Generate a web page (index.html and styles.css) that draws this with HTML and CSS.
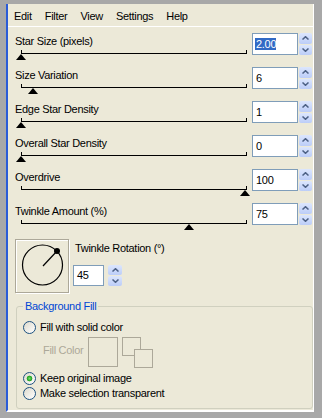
FILE: index.html
```html
<!DOCTYPE html>
<html lang="en">
	<head>
		<meta charset="UTF-8">
		<title>Star Effect</title>
		<link rel="stylesheet" href="styles.css">
	</head>
	<body>
		<div class="frame">
			<div class="panel">
				<div class="menubar">
					<span>Edit</span>
					<span>Filter</span>
					<span>View</span>
					<span>Settings</span>
					<span>Help</span>
				</div>

				<div class="rows">
					<div class="row">
						<div class="ctl">
							<div class="label">Star Size (pixels)</div>
							<div class="track"><span class="thumb" style="left:0px"></span></div>
						</div>
						<div class="spin">
							<div class="field field-sel"><span class="sel">2.00</span></div>
							<div class="arrows">
								<span class="btn"><svg width="7" height="4" viewBox="0 0 7 4"><polyline points="0.5,3.5 3.5,0.7 6.5,3.5"/></svg></span>
								<span class="btn"><svg width="7" height="4" viewBox="0 0 7 4"><polyline points="0.5,0.5 3.5,3.3 6.5,0.5"/></svg></span>
							</div>
						</div>
					</div>

					<div class="row">
						<div class="ctl">
							<div class="label">Size Variation</div>
							<div class="track"><span class="thumb" style="left:12px"></span></div>
						</div>
						<div class="spin">
							<div class="field">6</div>
							<div class="arrows">
								<span class="btn"><svg width="7" height="4" viewBox="0 0 7 4"><polyline points="0.5,3.5 3.5,0.7 6.5,3.5"/></svg></span>
								<span class="btn"><svg width="7" height="4" viewBox="0 0 7 4"><polyline points="0.5,0.5 3.5,3.3 6.5,0.5"/></svg></span>
							</div>
						</div>
					</div>

					<div class="row">
						<div class="ctl">
							<div class="label">Edge Star Density</div>
							<div class="track"><span class="thumb" style="left:0px"></span></div>
						</div>
						<div class="spin">
							<div class="field">1</div>
							<div class="arrows">
								<span class="btn"><svg width="7" height="4" viewBox="0 0 7 4"><polyline points="0.5,3.5 3.5,0.7 6.5,3.5"/></svg></span>
								<span class="btn"><svg width="7" height="4" viewBox="0 0 7 4"><polyline points="0.5,0.5 3.5,3.3 6.5,0.5"/></svg></span>
							</div>
						</div>
					</div>

					<div class="row">
						<div class="ctl">
							<div class="label">Overall Star Density</div>
							<div class="track"><span class="thumb" style="left:0px"></span></div>
						</div>
						<div class="spin">
							<div class="field">0</div>
							<div class="arrows">
								<span class="btn"><svg width="7" height="4" viewBox="0 0 7 4"><polyline points="0.5,3.5 3.5,0.7 6.5,3.5"/></svg></span>
								<span class="btn"><svg width="7" height="4" viewBox="0 0 7 4"><polyline points="0.5,0.5 3.5,3.3 6.5,0.5"/></svg></span>
							</div>
						</div>
					</div>

					<div class="row">
						<div class="ctl">
							<div class="label">Overdrive</div>
							<div class="track"><span class="thumb" style="left:224px"></span></div>
						</div>
						<div class="spin">
							<div class="field">100</div>
							<div class="arrows">
								<span class="btn"><svg width="7" height="4" viewBox="0 0 7 4"><polyline points="0.5,3.5 3.5,0.7 6.5,3.5"/></svg></span>
								<span class="btn"><svg width="7" height="4" viewBox="0 0 7 4"><polyline points="0.5,0.5 3.5,3.3 6.5,0.5"/></svg></span>
							</div>
						</div>
					</div>

					<div class="row">
						<div class="ctl">
							<div class="label">Twinkle Amount (%)</div>
							<div class="track"><span class="thumb" style="left:168px"></span></div>
						</div>
						<div class="spin">
							<div class="field">75</div>
							<div class="arrows">
								<span class="btn"><svg width="7" height="4" viewBox="0 0 7 4"><polyline points="0.5,3.5 3.5,0.7 6.5,3.5"/></svg></span>
								<span class="btn"><svg width="7" height="4" viewBox="0 0 7 4"><polyline points="0.5,0.5 3.5,3.3 6.5,0.5"/></svg></span>
							</div>
						</div>
					</div>
				</div>

				<div class="rotation">
					<div class="dial">
						<svg width="52" height="52" viewBox="0 0 52 52">
							<circle cx="26.5" cy="25" r="20" fill="none" stroke="#000" stroke-width="1.2"/>
							<line x1="27" y1="26" x2="41" y2="11" stroke="#000" stroke-width="1.2"/>
							<circle cx="41" cy="11" r="3" fill="#000"/>
						</svg>
					</div>
					<div class="rot">
						<div class="label">Twinkle Rotation (&deg;)</div>
						<div class="spin">
							<div class="field">45</div>
							<div class="arrows">
								<span class="btn"><svg width="7" height="4" viewBox="0 0 7 4"><polyline points="0.5,3.5 3.5,0.7 6.5,3.5"/></svg></span>
								<span class="btn"><svg width="7" height="4" viewBox="0 0 7 4"><polyline points="0.5,0.5 3.5,3.3 6.5,0.5"/></svg></span>
							</div>
						</div>
					</div>
				</div>

				<fieldset class="group">
					<legend>Background Fill</legend>
					<div class="opt"><span class="radio"></span>Fill with solid color</div>
					<div class="fill">
						<span class="fill-label">Fill Color</span>
						<span class="swatch"></span>
						<span class="swap">
							<span class="sq sq-back"></span>
							<span class="sq sq-front"></span>
						</span>
					</div>
					<div class="opt"><span class="radio checked"></span>Keep original image</div>
					<div class="opt opt-last"><span class="radio"></span>Make selection transparent</div>
				</fieldset>
			</div>
		</div>
	</body>
</html>
```

FILE: styles.css
```css
body {
	margin: 0;
	font-family: "Liberation Sans", Arial, sans-serif;
	font-size: 11px;
	letter-spacing: -0.3px;
	color: #000;
}

.frame {
	width: 322px;
	height: 418px;
	box-sizing: border-box;
	padding: 4px 8px 6px 6px;
	background-color: #a8a8a8;
}

.panel {
	height: 406px;
	background-color: #ece9d8;
	border-left: 2px solid #2a5bd7;
	border-right: 1px solid #fff;
	border-bottom: 2px solid #fff;
}

.menubar {
	display: flex;
	gap: 13px;
	height: 13px;
	line-height: 13px;
	padding: 6px 0 3px 6px;
	border-bottom: 1px solid #fff;
}

.rows {
	margin-top: 4px;
	padding-left: 7px;
}

.row {
	display: flex;
	height: 34px;
}

.ctl {
	width: 237px;
}

.label {
	margin-top: 4px;
	line-height: 13px;
	white-space: nowrap;
}

.track {
	position: relative;
	margin: 2px 0 0 6px;
	width: 224px;
	height: 3px;
	border: 1px solid #000;
	border-top: none;
}

.thumb {
	position: absolute;
	top: 4px;
	margin-left: -6px;
	width: 0;
	height: 0;
	border-left: 5.5px solid transparent;
	border-right: 5.5px solid transparent;
	border-bottom: 6px solid #000;
}

.spin {
	display: flex;
	gap: 1px;
	margin-top: 2px;
	height: 22px;
}

.field {
	box-sizing: border-box;
	width: 46px;
	height: 22px;
	padding-left: 3px;
	line-height: 20px;
	background-color: #fff;
	border: 1px solid #7f9db9;
}

.field-sel {
	padding-left: 2px;
}

.sel {
	padding-left: 1px;
	color: #fff;
	background-color: #316ac5;
}

.arrows {
	display: flex;
	flex-direction: column;
	gap: 1px;
	width: 13px;
}

.btn {
	flex: 1;
	display: flex;
	align-items: center;
	justify-content: center;
	border-radius: 2px;
	background: linear-gradient(#dce6fd, #bccdf8);
}

.btn polyline {
	fill: none;
	stroke: #4d6185;
	stroke-width: 1.5;
}

.rotation {
	display: flex;
	margin-top: 4px;
	padding-left: 7px;
}

.dial {
	width: 52px;
	height: 52px;
	border: 1px solid #aca899;
	box-shadow: inset 1px 1px #fff, 1px 1px #fff;
}

.rot {
	margin-left: 4px;
}

.rot .label {
	margin: 3px 0 0 2px;
}

.rot .spin {
	margin-top: 10px;
	gap: 4px;
	height: 21px;
}

.rot .field {
	width: 31px;
	height: 21px;
	line-height: 19px;
}

.rot .arrows {
	width: 14px;
}

.group {
	margin: 7px 0 0 8px;
	padding: 8px 6px 8px 6px;
	border: 1px solid #d0d0bf;
	border-radius: 3px;
}

.group legend {
	padding: 0 2px;
	line-height: 13px;
	color: #0046d5;
}

.opt {
	display: flex;
	align-items: center;
	gap: 4px;
	height: 13px;
	line-height: 13px;
	white-space: nowrap;
}

.opt-last {
	margin-top: 2px;
}

.radio {
	width: 11px;
	height: 11px;
	border: 1px solid #1c5180;
	border-radius: 50%;
	background: linear-gradient(135deg, #dcd9cc, #fff);
}

.radio.checked {
	background: radial-gradient(circle, #6fe06a 0, #21a121 2.5px, transparent 3.2px), linear-gradient(135deg, #dcd9cc, #fff);
}

.fill {
	display: flex;
	height: 31px;
	margin: 3px 0 4px;
	padding-left: 20px;
}

.fill-label {
	width: 45px;
	margin-top: 7px;
	line-height: 13px;
	color: #aca899;
}

.swatch {
	box-sizing: border-box;
	width: 30px;
	height: 30px;
	border: 1px solid #aca899;
}

.swap {
	position: relative;
	width: 31px;
	height: 31px;
	margin-left: 4px;
}

.sq {
	position: absolute;
	box-sizing: border-box;
	width: 19px;
	height: 19px;
	border: 1px solid #aca899;
	background-color: #ece9d8;
}

.sq-back {
	left: 0;
	top: 0;
}

.sq-front {
	left: 12px;
	top: 12px;
}
```
